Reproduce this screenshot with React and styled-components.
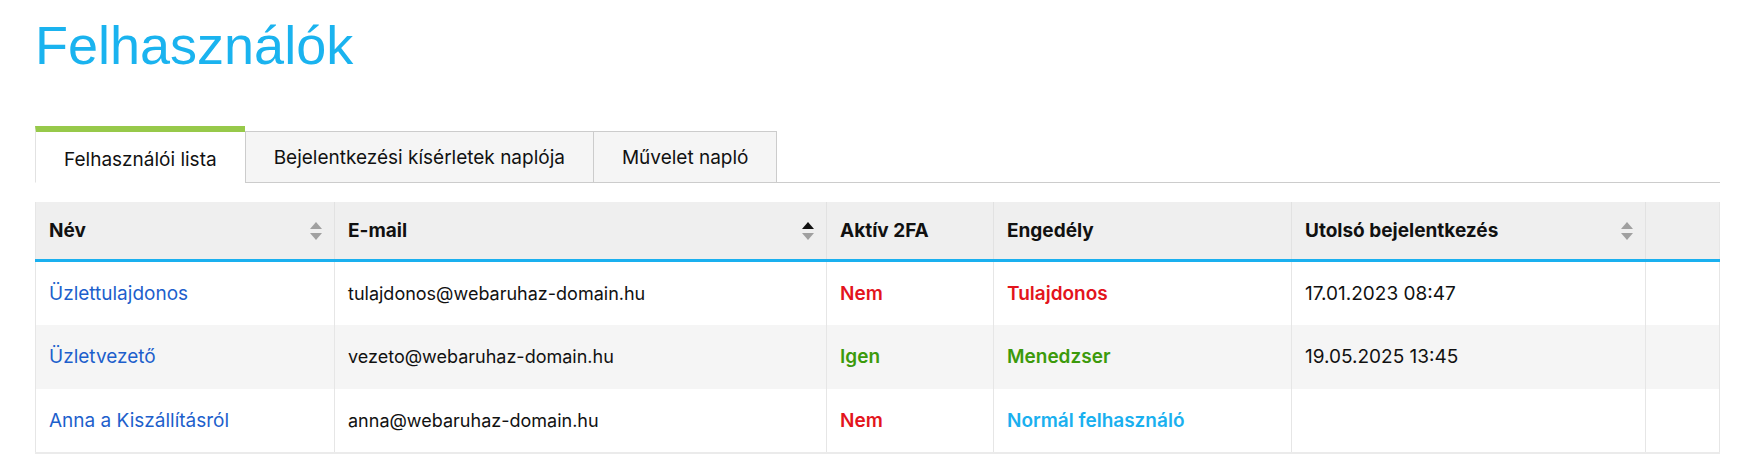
import React from 'react';
import styled, { createGlobalStyle } from 'styled-components';

const GlobalStyle = createGlobalStyle`
  body {
    margin: 0;
    background: #fff;
    font-family: Inter, "Noto Sans", sans-serif;
    color: #111;
  }
`

const Page = styled.div`
  padding: 18px 33px 20px 35px;
`

const Title = styled.h1`
  margin: 0;
  font-family: "Liberation Sans", Arial, sans-serif;
  font-weight: 400;
  font-size: 54px;
  line-height: 54px;
  color: #1ab3ef;
`

const TabBar = styled.div`
  display: flex;
  align-items: flex-end;
  margin-top: 54px;
  border-bottom: 1px solid #cccccc;
`

const Tab = styled.div`
  box-sizing: border-box;
  height: ${p => (p.$active ? '57px' : '52px')};
  padding: 0 28px;
  display: flex;
  align-items: center;
  padding-top: ${p => (p.$active ? '5px' : '0')};
  font-size: 19px;
  color: #111;
  white-space: nowrap;
  background: ${p => (p.$active ? '#fff' : '#f5f5f5')};
  border-top: ${p => (p.$active ? '6px solid #97c94a' : '1px solid #cccccc')};
  border-left: 1px solid ${p => (p.$active ? '#e2e2e2' : '#cccccc')};
  border-right: ${p => (p.$last ? '1px solid #cccccc' : '0')};
  margin-bottom: -1px;
  border-bottom: 1px solid ${p => (p.$active ? '#fff' : '#cccccc')};
  cursor: pointer;
`

const Table = styled.table`
  width: 100%;
  margin-top: 19px;
  border-collapse: collapse;
  table-layout: fixed;
  border-left: 1px solid #e6e6e6;
  border-right: 1px solid #e6e6e6;
  border-bottom: 2px solid #ebebeb;
`

const Th = styled.th`
  height: 57px;
  padding: 0 12px 0 13px;
  background: #efefef;
  text-align: left;
  font-size: 19px;
  font-weight: 700;
  color: #111;
  white-space: nowrap;
  border-left: 1px solid #e2e2e2;
  border-bottom: 3px solid #1ab0ef;
  &:first-child { border-left: 0; }
`

const ThInner = styled.div`
  display: flex;
  align-items: center;
  justify-content: space-between;
`

const Row = styled.tr`
  height: 64px;
  background: ${p => (p.$striped ? '#f5f5f5' : '#fff')};
  & + & td { border-top: 2px solid #ebebeb; }
`

const Td = styled.td`
  padding: 0 13px;
  font-size: ${p => (p.$small ? '18px' : '19px')};
  color: ${p => p.$color || '#111'};
  font-weight: ${p => (p.$bold ? 600 : 400)};
  white-space: nowrap;
  border-left: 1px solid #e6e6e6;
  &:first-child { border-left: 0; }
`

const NameLink = styled.a`
  color: #1d5fcc;
  text-decoration: none;
`

const SortWrap = styled.span`
  display: flex;
  flex-direction: column;
  gap: 4px;
`

const Tri = styled.span`
  width: 0;
  height: 0;
  border-left: 6px solid transparent;
  border-right: 6px solid transparent;
  ${p => (p.$up ? 'border-bottom' : 'border-top')}: 7px solid ${p => (p.$on ? '#111' : '#a0a0a0')};
`

const Sort = ({ active }) => (
  <SortWrap>
    <Tri $up $on={active === 'asc'} />
    <Tri $on={active === 'desc'} />
  </SortWrap>
)

const RED = '#e3141c';
const GREEN = '#3c9a0b';
const LIGHTBLUE = '#1ab0ef';

const users = [
  { name: 'Üzlettulajdonos', email: 'tulajdonos@webaruhaz-domain.hu', tfa: 'Nem', tfaColor: RED, role: 'Tulajdonos', roleColor: RED, last: '17.01.2023 08:47' },
  { name: 'Üzletvezető', email: 'vezeto@webaruhaz-domain.hu', tfa: 'Igen', tfaColor: GREEN, role: 'Menedzser', roleColor: GREEN, last: '19.05.2025 13:45' },
  { name: 'Anna a Kiszállításról', email: 'anna@webaruhaz-domain.hu', tfa: 'Nem', tfaColor: RED, role: 'Normál felhasználó', roleColor: LIGHTBLUE, last: '' },
];

const App = () => {
  return (
    <Page>
      <GlobalStyle />
      <Title>Felhasználók</Title>

      <TabBar>
        <Tab $active>Felhasználói lista</Tab>
        <Tab>Bejelentkezési kísérletek naplója</Tab>
        <Tab $last>Művelet napló</Tab>
      </TabBar>

      <Table>
        <colgroup>
          <col style={{ width: 299 }} />
          <col style={{ width: 492 }} />
          <col style={{ width: 167 }} />
          <col style={{ width: 298 }} />
          <col style={{ width: 354 }} />
          <col />
        </colgroup>
        <thead>
          <tr>
            <Th><ThInner>Név<Sort /></ThInner></Th>
            <Th><ThInner>E-mail<Sort active="asc" /></ThInner></Th>
            <Th>Aktív 2FA</Th>
            <Th>Engedély</Th>
            <Th><ThInner>Utolsó bejelentkezés<Sort /></ThInner></Th>
            <Th />
          </tr>
        </thead>
        <tbody>
          {users.map((u, i) => (
            <Row key={u.email} $striped={i % 2 === 1}>
              <Td><NameLink href="#">{u.name}</NameLink></Td>
              <Td $small>{u.email}</Td>
              <Td $bold $color={u.tfaColor}>{u.tfa}</Td>
              <Td $bold $color={u.roleColor}>{u.role}</Td>
              <Td>{u.last}</Td>
              <Td />
            </Row>
          ))}
        </tbody>
      </Table>
    </Page>
  )
}

export default App;
